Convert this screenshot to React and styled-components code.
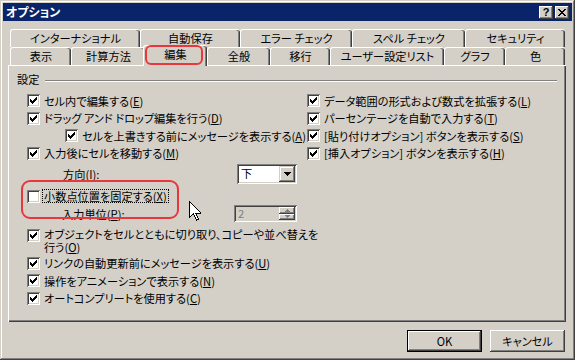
import React from "react";
import styled, { createGlobalStyle } from "styled-components";

const FACE = "#D4D0C8";
const SHADOW = "#808080";
const DARK = "#404040";
const RED = "#E8383D";

const GlobalStyle = createGlobalStyle`
  html, body { margin: 0; padding: 0; background: ${FACE}; }
  body {
    font-family: "Noto Sans CJK JP", "Noto Sans", sans-serif;
    font-size: 11.2px;
    font-feature-settings: "palt" 1;
    color: #000;
  }
  u { text-underline-offset: 1px; }
`;

const Window = styled.div`
  width: 575px;
  height: 360px;
  box-sizing: border-box;
  padding: 3px;
  background: ${FACE};
  box-shadow: inset -1px -1px ${DARK}, inset 1px 1px ${FACE},
    inset -2px -2px ${SHADOW}, inset 2px 2px #fff;
  display: flex;
  flex-direction: column;
`;

const TitleBar = styled.div`
  height: 18px;
  background: #0a246a;
  display: flex;
  align-items: center;
  justify-content: space-between;
  padding: 0 3px 0 3px;
`;

const TitleText = styled.span`
  color: #fff;
  font-weight: bold;
  font-size: 12px;
  line-height: 1;
`;

const CaptionButtons = styled.div`
  display: flex;
  gap: 2px;
  margin-top: 1px;
`;

const CaptionButton = styled.span`
  width: 14px;
  height: 13px;
  box-sizing: border-box;
  background: ${FACE};
  box-shadow: inset -1px -1px ${DARK}, inset 1px 1px #fff,
    inset -2px -2px ${SHADOW};
  display: flex;
  align-items: center;
  justify-content: center;
  font-family: "Liberation Sans", sans-serif;
  font-weight: bold;
  font-size: 11px;
  line-height: 1;
`;

const Body = styled.div`
  display: flex;
  flex-direction: column;
  padding: 8px 6px 0 5px;
`;

const TabStrip = styled.div`
  display: flex;
  flex-direction: column;
  margin-left: 2px;
`;

const TabRow = styled.div`
  display: flex;
  align-items: flex-end;
  height: 18px;
`;

const Tab = styled.div`
  position: relative;
  z-index: ${(p) => (p.$active ? 2 : 0)};
  box-sizing: border-box;
  width: ${(p) => p.$w}px;
  height: ${(p) => (p.$active ? 21 : 18)}px;
  margin: ${(p) => (p.$active ? "0 0 -1px -2px" : "0")};
  padding-bottom: ${(p) => (p.$active ? 2 : 0)}px;
  background: ${FACE};
  border-top: 1px solid #fff;
  border-left: 1px solid #fff;
  border-radius: 3px 3px 0 0;
  box-shadow: inset -1px 0 ${DARK}, inset -2px 0 ${SHADOW};
  display: flex;
  align-items: center;
  justify-content: center;
  line-height: 1;
  white-space: nowrap;
`;

const TabMark = styled.span`
  position: absolute;
  left: 1px;
  top: -1px;
  width: 58px;
  height: 20px;
  box-sizing: border-box;
  border: 2px solid ${RED};
  border-radius: 6px;
`;

const Panel = styled.div`
  position: relative;
  z-index: 1;
  box-sizing: border-box;
  width: 558px;
  height: 257px;
  padding: 7px 9px 0 9px;
  background: ${FACE};
  box-shadow: inset 1px 1px #fff, inset -1px -1px ${DARK},
    inset -2px -2px ${SHADOW};
`;

const GroupHeader = styled.div`
  height: 16px;
  display: flex;
  align-items: center;
  gap: 6px;
  line-height: 1;
`;

const GroupLine = styled.span`
  flex: 1;
  height: 1px;
  background: ${SHADOW};
  border-bottom: 1px solid #fff;
  margin-top: 1px;
`;

const Columns = styled.div`
  display: flex;
  margin-top: 4px;
  padding-left: 10px;
`;

const Column = styled.div`
  display: flex;
  flex-direction: column;
  width: ${(p) => p.$w}px;
`;

const Row = styled.div`
  display: flex;
  align-items: ${(p) => (p.$top ? "flex-start" : "center")};
  justify-content: ${(p) => (p.$spread ? "space-between" : "flex-start")};
  gap: 3px;
  height: ${(p) => p.$h || 17.5}px;
  margin-top: ${(p) => p.$mt || 0}px;
  padding-left: ${(p) => p.$indent || 0}px;
  padding-right: ${(p) => (p.$spread ? 10 : 0)}px;
  white-space: nowrap;
`;

const Box = styled.span`
  flex: none;
  width: 13px;
  height: 13px;
  margin-top: ${(p) => p.$mt || 0}px;
  box-sizing: border-box;
  background: #fff;
  box-shadow: inset 1px 1px ${SHADOW}, inset -1px -1px #fff,
    inset 2px 2px ${DARK}, inset -2px -2px ${FACE};
  display: flex;
`;

const Label = styled.span`
  line-height: 12.5px;
  padding: 0 1px;
  border: 1px ${(p) => (p.$focus ? "dotted #000" : "solid transparent")};
  margin-left: -1px;
`;

const FieldLabel = styled.span`
  line-height: 12px;
`;

const Combo = styled.div`
  width: 60px;
  height: 20px;
  box-sizing: border-box;
  padding: 2px;
  background: #fff;
  box-shadow: inset 1px 1px ${SHADOW}, inset -1px -1px #fff,
    inset 2px 2px ${DARK}, inset -2px -2px ${FACE};
  display: flex;
  align-items: center;
`;

const ComboText = styled.span`
  flex: 1;
  padding-left: 2px;
  line-height: 1;
`;

const ComboButton = styled.span`
  width: 16px;
  height: 16px;
  box-sizing: border-box;
  background: ${FACE};
  box-shadow: inset -1px -1px ${DARK}, inset 1px 1px ${FACE},
    inset -2px -2px ${SHADOW}, inset 2px 2px #fff;
  display: flex;
  align-items: center;
  justify-content: center;
`;

const Spinner = styled.div`
  width: 63px;
  height: 17px;
  box-sizing: border-box;
  padding: 2px;
  background: ${FACE};
  box-shadow: inset 1px 1px ${SHADOW}, inset -1px -1px #fff,
    inset 2px 2px ${DARK}, inset -2px -2px ${FACE};
  display: flex;
  align-items: stretch;
`;

const SpinText = styled.span`
  flex: 1;
  padding-left: 2px;
  color: ${SHADOW};
  line-height: 13px;
`;

const SpinButtons = styled.span`
  width: 16px;
  display: flex;
  flex-direction: column;
`;

const SpinButton = styled.span`
  flex: 1;
  background: ${FACE};
  box-shadow: inset -1px -1px ${DARK}, inset 1px 1px #fff,
    inset -2px -2px ${SHADOW};
  display: flex;
  align-items: center;
  justify-content: center;
`;

const Highlighted = styled.div`
  position: relative;
  display: flex;
  flex-direction: column;
`;

const RedBox = styled.span`
  position: absolute;
  left: -6px;
  top: -4px;
  width: 158px;
  height: 39px;
  box-sizing: border-box;
  border: 2px solid ${RED};
  border-radius: 9px;
  pointer-events: none;
`;

const Cursor = styled.svg`
  position: absolute;
  left: 181px;
  top: 136px;
`;

const ButtonRow = styled.div`
  display: flex;
  justify-content: flex-end;
  gap: 8px;
  margin-top: 8px;
  padding-right: 1px;
`;

const Button = styled.button`
  width: 75px;
  height: 22px;
  border: none;
  padding: 0;
  background: ${FACE};
  font: inherit;
  color: #000;
  box-shadow: ${(p) =>
    p.$default
      ? `inset 0 0 0 1px #000, inset -2px -2px ${DARK}, inset 2px 2px #fff, inset -3px -3px ${SHADOW}`
      : `inset -1px -1px ${DARK}, inset 1px 1px #fff, inset -2px -2px ${SHADOW}`};
`;

const CheckMark = () => (
  <svg width="13" height="13" viewBox="0 0 13 13" shapeRendering="crispEdges">
    <path d="M3 5h1v1h1v1h1v-1h1v-1h1v-1h1v-1h1v3h-1v1h-1v1h-1v1h-1v1h-1v-1h-1v-1h-1z" fill="#000" />
  </svg>
);

const CheckItem = ({ checked, children, focus, h, mt, indent, top, boxMt }) => (
  <Row $h={h} $mt={mt} $indent={indent} $top={top}>
    <Box $mt={boxMt}>{checked && <CheckMark />}</Box>
    <Label $focus={focus}>{children}</Label>
  </Row>
);

const DownArrow = () => (
  <svg width="7" height="4" viewBox="0 0 7 4" shapeRendering="crispEdges">
    <path d="M0 0h7v1h-1v1h-1v1h-1v1h-1v-1h-1v-1h-1v-1h-1z" fill="#000" />
  </svg>
);

const SmallArrow = ({ up }) => (
  <svg width="5" height="3" viewBox="0 0 5 3" shapeRendering="crispEdges">
    <path
      d={up ? "M2 0h1v1h1v1h1v1h-5v-1h1v-1h1z" : "M0 0h5v1h-1v1h-1v1h-1v-1h-1v-1h-1z"}
      fill={SHADOW}
    />
  </svg>
);

const backTabs = [
  ["インターナショナル", 130],
  ["自動保存", 100],
  ["エラー チェック", 112],
  ["スペル チェック", 113],
  ["セキュリティ", 100],
];

const frontTabs = [
  ["表示", 61],
  ["計算方法", 74],
  ["編集", 64, true],
  ["全般", 63],
  ["移行", 60],
  ["ユーザー設定リスト", 114],
  ["グラフ", 61],
  ["色", 60],
];

export default function App() {
  return (
    <>
      <GlobalStyle />
      <Window>
        <TitleBar>
          <TitleText>オプション</TitleText>
          <CaptionButtons>
            <CaptionButton>?</CaptionButton>
            <CaptionButton>
              <svg width="8" height="7" viewBox="0 0 8 7" shapeRendering="crispEdges">
                <path d="M0 0h2v1h1v1h2v-1h1v-1h2v1h-1v1h-1v1h-1v1h1v1h1v1h1v1h-2v-1h-1v-1h-2v1h-1v1h-2v-1h1v-1h1v-1h1v-1h-1v-1h-1v-1h-1z" fill="#000" />
              </svg>
            </CaptionButton>
          </CaptionButtons>
        </TitleBar>

        <Body>
          <TabStrip>
            <TabRow>
              {backTabs.map(([name, w]) => (
                <Tab key={name} $w={w}>{name}</Tab>
              ))}
            </TabRow>
            <TabRow>
              {frontTabs.map(([name, w, active]) => (
                <Tab key={name} $w={w} $active={active}>
                  {name}
                  {active && <TabMark />}
                </Tab>
              ))}
            </TabRow>
          </TabStrip>

          <Panel>
            <GroupHeader>
              <span>設定</span>
              <GroupLine />
            </GroupHeader>
            <Columns>
              <Column $w={280}>
                <CheckItem checked>セル内で編集する(<u>E</u>)</CheckItem>
                <CheckItem checked>ドラッグ アンド ドロップ編集を行う(<u>D</u>)</CheckItem>
                <CheckItem checked indent={38}>
                  セルを上書きする前にメッセージを表示する(<u>A</u>)
                </CheckItem>
                <CheckItem checked>入力後にセルを移動する(<u>M</u>)</CheckItem>
                <Row $h={20} $mt={2} $indent={36} $spread>
                  <FieldLabel>方向(<u>I</u>):</FieldLabel>
                  <Combo>
                    <ComboText>下</ComboText>
                    <ComboButton>
                      <DownArrow />
                    </ComboButton>
                  </Combo>
                </Row>
                <Highlighted>
                  <CheckItem h={18} mt={3} focus>
                    小数点位置を固定する(<u>X</u>)
                  </CheckItem>
                  <Row $h={17} $indent={35} $spread>
                    <FieldLabel>入力単位(<u>P</u>):</FieldLabel>
                    <Spinner>
                      <SpinText>2</SpinText>
                      <SpinButtons>
                        <SpinButton>
                          <SmallArrow up />
                        </SpinButton>
                        <SpinButton>
                          <SmallArrow />
                        </SpinButton>
                      </SpinButtons>
                    </Spinner>
                  </Row>
                  <RedBox />
                </Highlighted>
                <CheckItem checked h={26} mt={5} top boxMt={2}>
                  オブジェクトをセルとともに切り取り、コピーや並べ替えを
                  <br />
                  行う(<u>O</u>)
                </CheckItem>
                <CheckItem checked mt={1.5}>
                  リンクの自動更新前にメッセージを表示する(<u>U</u>)
                </CheckItem>
                <CheckItem checked>操作をアニメーションで表示する(<u>N</u>)</CheckItem>
                <CheckItem checked>オートコンプリートを使用する(<u>C</u>)</CheckItem>
              </Column>
              <Column $w={250}>
                <CheckItem checked>データ範囲の形式および数式を拡張する(<u>L</u>)</CheckItem>
                <CheckItem checked>パーセンテージを自動で入力する(<u>T</u>)</CheckItem>
                <CheckItem checked>[貼り付けオプション] ボタンを表示する(<u>S</u>)</CheckItem>
                <CheckItem checked>[挿入オプション] ボタンを表示する(<u>H</u>)</CheckItem>
              </Column>
            </Columns>
            <Cursor width="12" height="20" viewBox="0 0 12 20" shapeRendering="crispEdges">
              <path d="M0.5 0.5v16l4-4 3 6.5 2-1-3-6h5.5z" fill="#fff" stroke="#000" strokeWidth="1" />
            </Cursor>
          </Panel>

          <ButtonRow>
            <Button $default>OK</Button>
            <Button>キャンセル</Button>
          </ButtonRow>
        </Body>
      </Window>
    </>
  );
}
